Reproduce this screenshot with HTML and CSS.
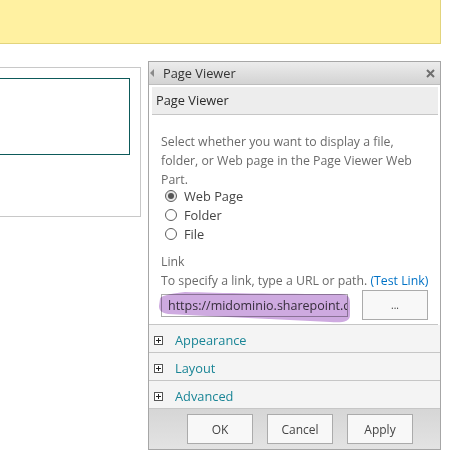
FILE: index.html
```html
<!DOCTYPE html>
<html>
<head>
<meta charset="utf-8">
<link rel="stylesheet" href="styles.css">
</head>
<body>
<div class="banner"></div>
<div class="main">
  <div class="leftbox"><div class="inner"></div></div>
  <div class="panel">
    <div class="titlebar">
      <svg class="arrow" width="14" height="10" viewBox="0 0 14 10"><polygon points="5,1 5,9 1,5" fill="#8a8a8a"/></svg>
      <span class="title">Page Viewer</span>
      <svg class="close" width="9" height="9" viewBox="0 0 9 9"><path d="M1,1 L8,8 M8,1 L1,8" stroke="#6e6e6e" stroke-width="2"/></svg>
    </div>
    <div class="section-head">Page Viewer</div>
    <div class="content">
      <p class="desc">Select whether you want to display a file,<br>folder, or Web page in the Page Viewer Web<br>Part.</p>
      <div class="radios">
        <label class="radio"><span class="dot checked"></span>Web Page</label>
        <label class="radio"><span class="dot"></span>Folder</label>
        <label class="radio"><span class="dot"></span>File</label>
      </div>
      <div class="link-label">Link</div>
      <div class="link-help">To specify a link, type a URL or path. <a class="test-link">(Test Link)</a></div>
      <div class="link-row">
        <div class="url-input">https://midominio.sharepoint.com</div>
        <svg class="marker" width="196" height="34" viewBox="0 0 196 34"><path d="M2,8 C2,5 10,3 27,1 C60,2 120,3 182,3 C190,3 192,6 192,12 L192,24 C192,31 184,32 172,31 C120,28 60,26 10,23 C4,22 1,20 1,15 Z" fill="rgb(206,170,224)"/></svg>
        <button class="btn browse">...</button>
      </div>
    </div>
    <div class="group"><span class="plus"></span>Appearance</div>
    <div class="group"><span class="plus"></span>Layout</div>
    <div class="group"><span class="plus"></span>Advanced</div>
    <div class="footer">
      <button class="btn">OK</button>
      <button class="btn">Cancel</button>
      <button class="btn">Apply</button>
    </div>
  </div>
</div>
</body>
</html>
```
FILE: styles.css
```css
body {
  margin: 0;
  background: #fff;
  font-family: "Open Sans", "Noto Sans", sans-serif;
  font-size: 12.3px;
  color: #444;
}

.banner {
  width: 440px;
  height: 43px;
  background: #fff1a1;
  border-right: 1px solid #e2d47c;
  border-bottom: 1px solid #e2d47c;
}

.main {
  display: flex;
  align-items: flex-start;
  gap: 7px;
}

.leftbox {
  margin-top: 23px;
  width: 141px;
  height: 150px;
  box-sizing: border-box;
  border: 1px solid #c8c8c8;
  border-left: none;
  padding-top: 10px;
}

.inner {
  width: 130px;
  height: 77px;
  box-sizing: border-box;
  border: 1px solid #0d5a5a;
  border-left: none;
}

.panel {
  margin-top: 17px;
  width: 293px;
  height: 389px;
  box-sizing: border-box;
  border: 1px solid #a6a6a6;
  display: flex;
  flex-direction: column;
}

.titlebar {
  height: 23px;
  box-sizing: border-box;
  border-bottom: 1px solid #bdbdbd;
  background: linear-gradient(#ececec, #d3d3d3);
  display: flex;
  align-items: center;
  padding-right: 5px;
}

.title {
  flex: 1;
  color: #333;
  line-height: 22px;
  font-size: 12.8px;
}

.close {
  display: block;
}

.section-head {
  margin: 2px 2px 0 3px;
  height: 28px;
  box-sizing: border-box;
  border-bottom: 1px solid #c6c6c6;
  background: #ededed;
  padding-left: 4px;
  line-height: 27px;
  font-size: 12.8px;
  color: #2b2b2b;
}

.content {
  margin-right: 2px;
  padding: 17px 0 4px 12px;
  border-bottom: 1px solid #c6c6c6;
}

.desc {
  margin: 0;
  line-height: 19px;
  color: #6a6a6a;
}

.radios {
  margin-top: -3px;
  padding-left: 4px;
}

.radio {
  display: flex;
  align-items: center;
  height: 19px;
  font-size: 12.8px;
  color: #444;
}

.dot {
  width: 12px;
  height: 12px;
  box-sizing: border-box;
  border: 1px solid #5c5c5c;
  border-radius: 50%;
  margin-right: 7px;
  display: flex;
  align-items: center;
  justify-content: center;
}

.dot.checked {
  background: #e6e6e6;
}

.dot.checked::after {
  content: "";
  width: 6px;
  height: 6px;
  border-radius: 50%;
  background: #555;
}

.link-label {
  margin-top: 9px;
  line-height: 19px;
  color: #6a6a6a;
}

.link-help {
  line-height: 19px;
  color: #6a6a6a;
}

.test-link {
  color: #0072c6;
}

.link-row {
  position: relative;
  margin-top: 0;
  display: flex;
  align-items: center;
  height: 30px;
}

.url-input {
  width: 187px;
  height: 23px;
  box-sizing: border-box;
  border: 1px solid #ababab;
  padding: 0 6px;
  line-height: 21px;
  font-size: 12.5px;
  white-space: nowrap;
  overflow: hidden;
  color: #444;
}

.marker {
  position: absolute;
  left: -3px;
  top: 1px;
  mix-blend-mode: multiply;
}

.btn {
  width: 66px;
  height: 30px;
  box-sizing: border-box;
  border: 1px solid #ababab;
  background: #f8f8f8;
  font-family: "Open Sans", "Noto Sans", sans-serif;
  font-size: 12px;
  color: #444;
  padding: 0;
}

.browse {
  margin-left: 14px;
  font-size: 10px;
}

.group {
  height: 28px;
  box-sizing: border-box;
  border-bottom: 1px solid #c6c6c6;
  background: #f4f4f4;
  display: flex;
  align-items: center;
  padding-left: 5px;
  padding-top: 3px;
  font-size: 12.8px;
  color: #1a8596;
}

.plus {
  position: relative;
  width: 9px;
  height: 9px;
  box-sizing: border-box;
  border: 1px solid #555;
  background: #fff;
  margin-right: 12px;
}

.plus::before,
.plus::after {
  content: "";
  position: absolute;
  background: #222;
}

.plus::before {
  left: 1px;
  top: 3px;
  width: 5px;
  height: 1px;
}

.plus::after {
  left: 3px;
  top: 1px;
  width: 1px;
  height: 5px;
}

.footer {
  flex: 1;
  background: linear-gradient(#d6d6d6, #e3e3e3);
  display: flex;
  align-items: center;
  gap: 14px;
  padding-left: 38px;
}
```
